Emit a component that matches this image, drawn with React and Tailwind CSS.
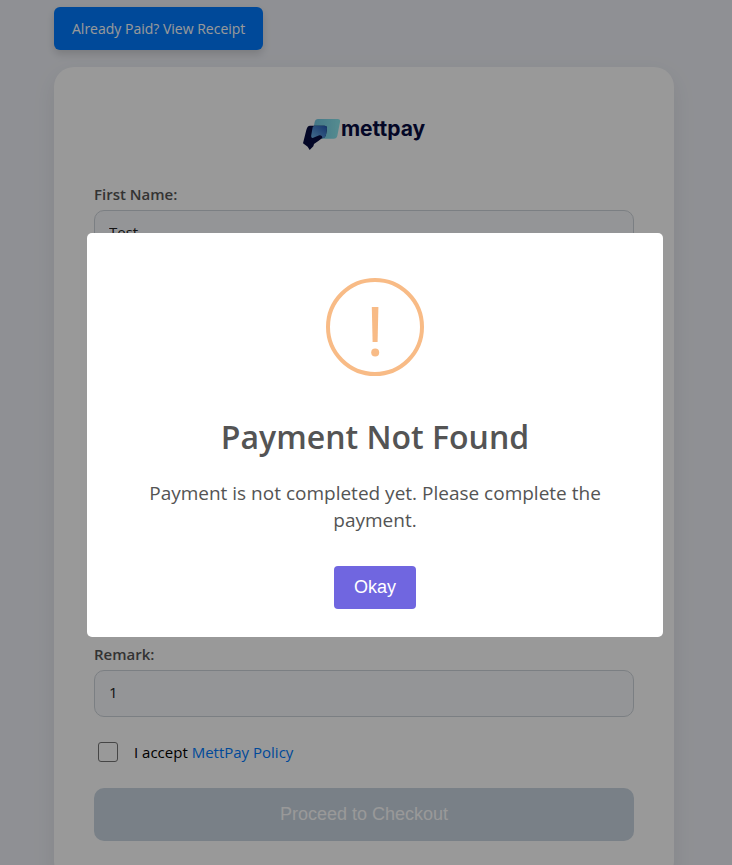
import React, { useState } from "react";

const fields = [
  { id: "firstName", label: "First Name:", value: "Test" },
  { id: "lastName", label: "Last Name:", value: "Test" },
  { id: "email", label: "Email:", value: "test@example.com" },
  { id: "mobile", label: "Mobile:", value: "9999999999" },
  { id: "amount", label: "Amount:", value: "1" },
  { id: "remark", label: "Remark:", value: "1" },
];

const Logo = () => (
  <div className="flex justify-center">
    <svg width="38" height="32" viewBox="39 42 114 96" aria-hidden="true">
      <defs>
        <linearGradient id="cardFill" x1="0" y1="0" x2="1" y2="0">
          <stop offset="0" stopColor="#6fc3e0" />
          <stop offset="1" stopColor="#8eeaf0" />
        </linearGradient>
        <linearGradient id="overlapFill" x1="0" y1="1" x2="1" y2="0">
          <stop offset="0" stopColor="#6fb4ea" />
          <stop offset="1" stopColor="#2458b4" />
        </linearGradient>
      </defs>
      <path
        d="M84 45H143Q152 45 150 54L142 95Q140 104 131 104H73Q64 104 66 95L74 54Q76 45 84 45Z"
        fill="url(#cardFill)"
      />
      <path
        d="M60 65H103Q112 65 111 74L108 92Q106 101 96 103L86 110L72 120L70 127L59 138L53 128L39 118L49 78Q52 65 60 65Z"
        fill="#080d42"
      />
      <path
        d="M72 65H103Q112 65 111 74L108 92Q106 102 97 102Q97 93 88 94L68 102Q62 101 64 92L68 70Z"
        fill="url(#overlapFill)"
      />
    </svg>
    <span className="font-['Inter',sans-serif] text-[21px] leading-[22px] font-bold text-[#080d42]">
      mettpay
    </span>
  </div>
);

const Field = ({ id, label, value, onChange }) => (
  <div className="mb-[19px]">
    <label htmlFor={id} className="mb-1.5 block text-[15px] leading-5 font-semibold text-[#555]">
      {label}
    </label>
    <input
      id={id}
      type="text"
      value={value}
      onChange={onChange}
      className="h-[47px] w-full rounded-[10px] border border-[#ced4da] bg-[#f7f9fc] px-3.5 pb-[3px] text-[15px] text-[#222] outline-none"
    />
  </div>
);

const Alert = ({ onClose }) => (
  <div className="fixed inset-0 flex items-center justify-center bg-black/40 pt-[5px] pl-[18px]">
    <div
      role="alertdialog"
      aria-labelledby="alertTitle"
      className="flex w-[576px] max-w-full flex-col items-center rounded-[5px] bg-white px-8 pt-[45px] pb-7 text-center text-[#545454]"
    >
      <svg width="98" height="98" viewBox="0 0 98 98" aria-hidden="true">
        <circle cx="49" cy="49" r="47" fill="none" stroke="#f8bb86" strokeWidth="4" />
        <path d="M45.8 29H52.4L51.6 64H46.6Z" fill="#f8bb86" />
        <circle cx="49.2" cy="74.5" r="4" fill="#f8bb86" />
      </svg>
      <h2 id="alertTitle" className="mt-9 text-[32px] leading-[50px] font-semibold">
        Payment Not Found
      </h2>
      <p className="mt-[18px] px-5 text-[19px] leading-[27px]">
        Payment is not completed yet. Please complete the payment.
      </p>
      <button
        type="button"
        onClick={onClose}
        className="mt-8 h-[43px] rounded bg-[#7066e0] px-5 pb-0.5 font-['Liberation_Sans',sans-serif] text-lg text-white"
      >
        Okay
      </button>
    </div>
  </div>
);

const App = () => {
  const [form, setForm] = useState(
    Object.fromEntries(fields.map((field) => [field.id, field.value]))
  );
  const [accepted, setAccepted] = useState(false);
  const [showAlert, setShowAlert] = useState(true);

  return (
    <div
      className={`min-h-screen bg-[#eff1f7] pt-[7px] pr-[58px] pb-10 pl-[54px] font-['Open_Sans','Noto_Sans',sans-serif] ${
        showAlert ? "h-screen overflow-hidden" : ""
      }`}
    >
      <button
        type="button"
        onClick={() => setShowAlert(true)}
        className="block h-[43px] rounded-md bg-[#007bff] px-[18px] text-sm text-white shadow-[0_4px_8px_rgba(0,0,0,0.15)]"
      >
        Already Paid? View Receipt
      </button>

      {/* Payment form */}
      <form
        className="mt-[17px] rounded-[20px] bg-white px-10 pt-[51px] pb-10 shadow-[0_8px_25px_rgba(0,0,0,0.08)]"
        onSubmit={(e) => e.preventDefault()}
      >
        <Logo />
        <div className="mt-[34px]">
          {fields.map(({ id, label }) => (
            <Field
              key={id}
              id={id}
              label={label}
              value={form[id]}
              onChange={(e) => setForm({ ...form, [id]: e.target.value })}
            />
          ))}
        </div>

        <div className="flex items-center gap-4 pt-1 pl-1 text-[15px] leading-6">
          <input
            id="policy"
            type="checkbox"
            checked={accepted}
            onChange={(e) => setAccepted(e.target.checked)}
            className="h-5 w-5 appearance-none rounded-[3px] border border-[#767676] bg-white checked:bg-[#007bff]"
          />
          <label htmlFor="policy">
            I accept{" "}
            <a href="#policy" className="text-[#007bff]">
              MettPay Policy
            </a>
          </label>
        </div>

        <button
          type="submit"
          disabled={!accepted}
          className="mt-6 h-[53px] w-full rounded-[10px] bg-[#007bff] pb-0.5 font-['Liberation_Sans',sans-serif] text-lg text-white disabled:bg-[#cad6e2]"
        >
          Proceed to Checkout
        </button>
      </form>

      {showAlert && <Alert onClose={() => setShowAlert(false)} />}
    </div>
  );
};

export default App;
